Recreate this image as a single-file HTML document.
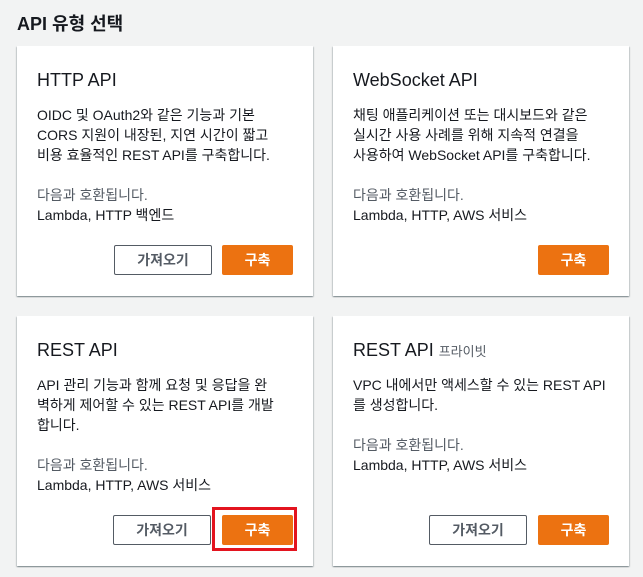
<!DOCTYPE html>
<html><head><meta charset="utf-8"><style>
body{margin:0;width:643px;height:577px;background:#f2f3f3;font-family:"Liberation Sans","Noto Sans CJK KR",sans-serif;color:#16191f;position:relative;overflow:hidden}
h1{position:absolute;left:17px;top:11px;margin:0;font-size:18px;font-weight:bold;line-height:26px}
.card{position:absolute;background:#fff;box-shadow:0 1px 1px rgba(0,28,36,.3),1px 1px 1px rgba(0,28,36,.15),-1px 1px 1px rgba(0,28,36,.15);box-sizing:border-box;padding:0 20px}
.t{position:absolute;left:20px;top:21px;font-size:18px;line-height:26px}
.t small{font-size:13px;color:#545b64}
.d{position:absolute;left:20px;top:59px;white-space:nowrap;font-size:14px;line-height:20px}
.c{position:absolute;left:20px;font-size:14px;line-height:20px;white-space:nowrap}
.g{color:#545b64}
.b{position:absolute;top:199px;height:30px;box-sizing:border-box;font-size:14px;font-weight:bold;display:flex;align-items:center;justify-content:center}
.w{border:1px solid #545b64;color:#545b64;background:#fff;border-radius:2px}
.o{background:#ec7211;color:#fff;border-radius:2px}
</style></head><body>
<h1>API 유형 선택</h1>

<div class="card" style="left:17px;top:46px;width:296px;height:250px">
<div class="t">HTTP API</div>
<div class="d">OIDC 및 OAuth2와 같은 기능과 기본<br>CORS 지원이 내장된, 지연 시간이 짧고<br>비용 효율적인 REST API를 구축합니다.</div>
<div class="c" style="top:139px"><span class="g">다음과 호환됩니다.</span><br>Lambda, HTTP 백엔드</div>
<div class="b w" style="left:97px;width:98px">가져오기</div>
<div class="b o" style="left:205px;width:71px">구축</div>
</div>

<div class="card" style="left:333px;top:46px;width:296px;height:250px">
<div class="t">WebSocket API</div>
<div class="d">채팅 애플리케이션 또는 대시보드와 같은<br>실시간 사용 사례를 위해 지속적 연결을<br>사용하여 WebSocket API를 구축합니다.</div>
<div class="c" style="top:139px"><span class="g">다음과 호환됩니다.</span><br>Lambda, HTTP, AWS 서비스</div>
<div class="b o" style="left:205px;width:71px">구축</div>
</div>

<div class="card" style="left:17px;top:316px;width:296px;height:250px">
<div class="t">REST API</div>
<div class="d">API 관리 기능과 함께 요청 및 응답을 완<br>벽하게 제어할 수 있는 REST API를 개발<br>합니다.</div>
<div class="c" style="top:139px"><span class="g">다음과 호환됩니다.</span><br>Lambda, HTTP, AWS 서비스</div>
<div class="b w" style="left:96px;width:98px">가져오기</div>
<div class="b o" style="left:205px;width:71px">구축</div>
</div>

<div class="card" style="left:333px;top:316px;width:296px;height:250px">
<div class="t">REST API <small>프라이빗</small></div>
<div class="d">VPC 내에서만 액세스할 수 있는 REST API<br>를 생성합니다.</div>
<div class="c" style="top:119px"><span class="g">다음과 호환됩니다.</span><br>Lambda, HTTP, AWS 서비스</div>
<div class="b w" style="left:96px;width:98px">가져오기</div>
<div class="b o" style="left:205px;width:71px">구축</div>
</div>

<div style="position:absolute;left:212px;top:507px;width:85px;height:44px;box-sizing:border-box;border:3px solid #e3141f"></div>
</body></html>
